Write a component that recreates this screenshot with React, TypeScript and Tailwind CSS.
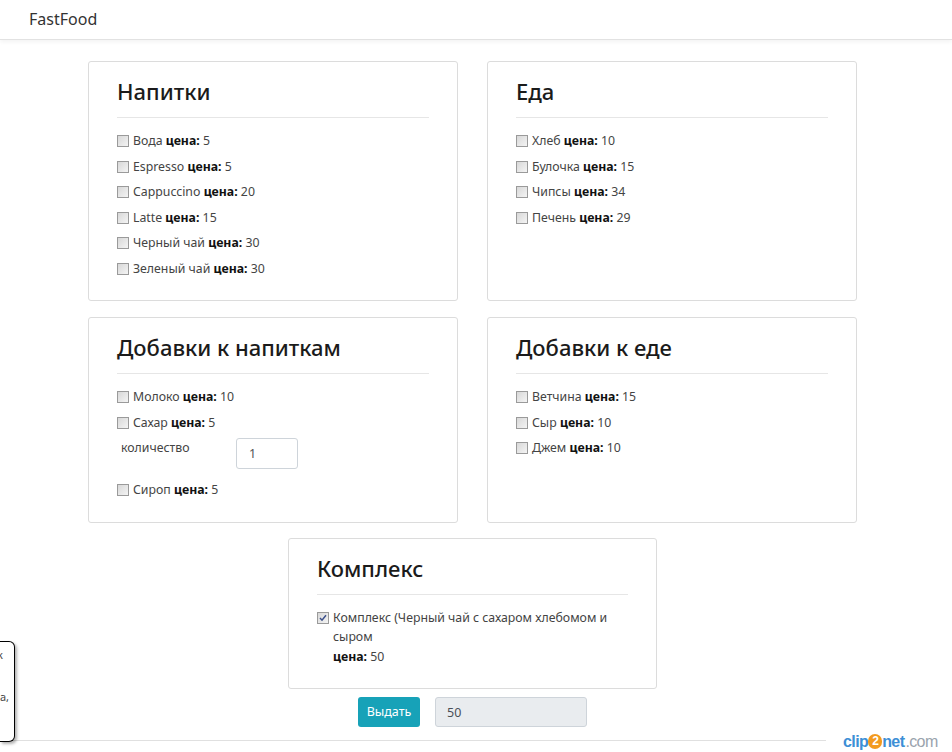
// region imports
import { ReactNode } from "react";
// endregion

// region types
interface Producto {
  nombre: string;
  precio: number;
}
// endregion

// region data
const bebidas: Producto[] = [
  { nombre: "Вода", precio: 5 },
  { nombre: "Espresso", precio: 5 },
  { nombre: "Cappuccino", precio: 20 },
  { nombre: "Latte", precio: 15 },
  { nombre: "Черный чай", precio: 30 },
  { nombre: "Зеленый чай", precio: 30 },
];

const comida: Producto[] = [
  { nombre: "Хлеб", precio: 10 },
  { nombre: "Булочка", precio: 15 },
  { nombre: "Чипсы", precio: 34 },
  { nombre: "Печень", precio: 29 },
];

const extrasComida: Producto[] = [
  { nombre: "Ветчина", precio: 15 },
  { nombre: "Сыр", precio: 10 },
  { nombre: "Джем", precio: 10 },
];
// endregion

// region components
function Casilla({ marcada = false }: { marcada?: boolean }) {
  return (
    <span className="mt-[4px] flex h-[12px] w-[12px] shrink-0 items-center justify-center border border-[#9a9a9a] bg-gradient-to-br from-[#d8d8d8] to-[#f4f4f4]">
      {marcada && (
        <svg width="8" height="8" viewBox="0 0 8 8">
          <path d="M1 4 L3 6.2 L7 1.2" fill="none" stroke="#3b4f8a" strokeWidth="1.5" />
        </svg>
      )}
    </span>
  );
}

function Item({ producto }: { producto: Producto }) {
  return (
    <label className="flex items-start gap-[4px]">
      <Casilla />
      <span>
        {producto.nombre} <b className="font-bold text-[#111]">цена:</b> {producto.precio}
      </span>
    </label>
  );
}

function Tarjeta({ titulo, children }: { titulo: string; children: ReactNode }) {
  return (
    <div className="rounded-[3px] border border-[#dcdcdc] bg-white px-[28px] pt-[16px] pb-[22px]">
      <h2 className="text-[22px] leading-[26px] font-medium text-[#1b1b1b]">{titulo}</h2>
      <hr className="mt-[13px] mb-[13px] border-t border-[#e6e6e6]" />
      <div className="flex flex-col gap-[6px]">{children}</div>
    </div>
  );
}
// endregion

// region app
export default function App() {
  return (
    <div className="relative min-h-[752px] overflow-hidden bg-white font-['Noto_Sans','Open_Sans',sans-serif] text-[12.3px] leading-[19.5px] text-[#444]">
      {/* Navbar */}
      <nav className="flex h-[40px] items-center border-b border-[#e2e2e2] px-[29px] shadow-[0_2px_4px_rgba(0,0,0,0.05)]">
        <span className="text-[16px] text-[#333]">FastFood</span>
      </nav>

      <div className="ml-[88px] w-[769px] pt-[21px]">
        <div className="grid grid-cols-2 gap-x-[29px] gap-y-[16px]">
          <Tarjeta titulo="Напитки">
            {bebidas.map((p) => (
              <Item key={p.nombre} producto={p} />
            ))}
          </Tarjeta>

          <Tarjeta titulo="Еда">
            {comida.map((p) => (
              <Item key={p.nombre} producto={p} />
            ))}
          </Tarjeta>

          <Tarjeta titulo="Добавки к напиткам">
            <Item producto={{ nombre: "Молоко", precio: 10 }} />
            <Item producto={{ nombre: "Сахар", precio: 5 }} />
            <div className="mb-[5px] flex items-start">
              <span className="w-[119px] pl-[4px]">количество</span>
              <input
                readOnly
                value="1"
                className="h-[31px] w-[62px] rounded-[3px] border border-[#ced4da] px-[12px] text-[12.5px] text-[#555] outline-none"
              />
            </div>
            <Item producto={{ nombre: "Сироп", precio: 5 }} />
          </Tarjeta>

          <Tarjeta titulo="Добавки к еде">
            {extrasComida.map((p) => (
              <Item key={p.nombre} producto={p} />
            ))}
          </Tarjeta>
        </div>

        {/* Complejo */}
        <div className="mx-auto mt-[15px] w-[369px]">
          <Tarjeta titulo="Комплекс">
            <label className="flex items-start gap-[4px]">
              <Casilla marcada />
              <span>
                Комплекс (Черный чай с сахаром хлебомом и сыром
                <br />
                <b className="font-bold text-[#111]">цена:</b> 50
              </span>
            </label>
          </Tarjeta>
        </div>

        {/* Acciones */}
        <div className="mt-[8px] flex justify-center gap-[15px]">
          <button className="h-[30px] w-[62px] rounded-[3px] bg-[#17a2b8] text-[12.5px] text-white">
            Выдать
          </button>
          <input
            readOnly
            value="50"
            className="h-[30px] w-[152px] rounded-[3px] border border-[#ced4da] bg-[#e9ecef] px-[11px] text-[12.5px] text-[#495057] outline-none"
          />
        </div>
      </div>

      {/* Línea inferior */}
      <hr className="mt-[13px] w-[826px] border-t border-[#e0e0e0]" />

      {/* Marca de agua */}
      <span className="absolute top-[733px] left-[843px] flex items-center font-['Liberation_Sans',sans-serif] text-[16px] leading-[17px] font-bold tracking-[-0.6px]">
        <span className="text-[#3d8fd6]">clip</span>
        <span className="flex h-[15px] w-[14px] items-center justify-center rounded-full bg-[#f39a1e] text-[12px] text-white">2</span>
        <span className="text-[#3d8fd6]">net</span>
        <span className="ml-[1px] font-normal text-[#9aa3ad]">.com</span>
      </span>

      {/* Tooltip recortado */}
      <div className="absolute top-[641px] left-0 flex h-[101px] w-[15px] flex-col items-start overflow-hidden rounded-r-[6px] border-y border-r border-black bg-white pt-[6px] text-[11px] leading-[14px] text-[#444] shadow-[2px_2px_3px_rgba(0,0,0,0.3)]">
        <span className="-ml-[3px]">к</span>
        <span className="mt-[28px]">а,</span>
      </div>
    </div>
  );
}
// endregion
